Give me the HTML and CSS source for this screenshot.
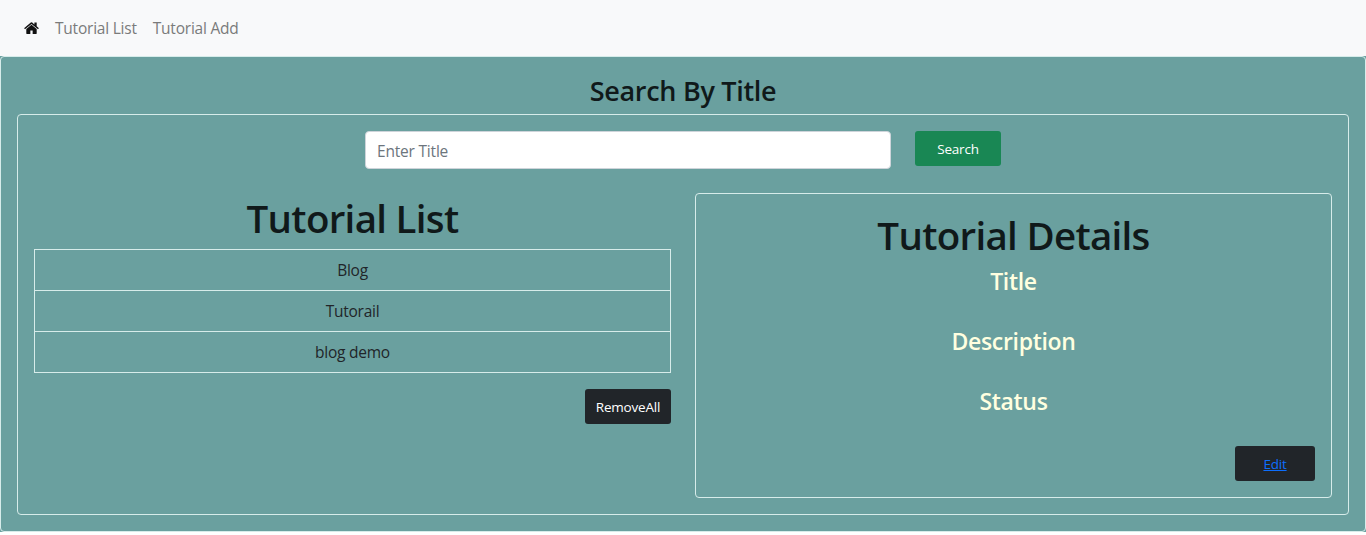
FILE: index.html
```html
<!DOCTYPE html>
<html lang="en">
<head>
<meta charset="utf-8">
<title>Tutorials</title>
<link rel="stylesheet" href="styles.css">
</head>
<body>
<nav class="navbar">
  <a class="home" href="#" aria-label="Home"><svg viewBox="0 0 1664 1312" width="15" height="12"><path fill="currentColor" d="M1408 768v480q0 26-19 45t-45 19H960V928H704v384H320q-26 0-45-19t-19-45V768l1-6 575-474 575 474 1 6zm223-69l-62 74q-8 9-21 11h-3q-13 0-21-7L832 200 140 777q-12 8-24 7-13-2-21-11l-62-74q-8-10-7-23.500T37 654L756 55q32-26 76-26t76 26l244 204V64q0-14 9-23t23-9h192q14 0 23 9t9 23v408l219 182q10 8 11 21.500t-7 23.500z"/></svg></a>
  <a class="nav-link" href="#">Tutorial List</a>
  <a class="nav-link" href="#">Tutorial Add</a>
</nav>
<main class="page">
  <section class="card outer">
    <h3 class="search-heading">Search By Title</h3>
    <div class="card inner">
      <form class="search">
        <input class="search-input" type="text" placeholder="Enter Title">
        <button class="btn btn-search" type="button">Search</button>
      </form>
      <div class="columns">
        <div class="list-column">
          <h1 class="heading list-heading">Tutorial List</h1>
          <ul class="list">
            <li class="item item-blog">Blog</li>
            <li class="item item-tutorial">Tutorail</li>
            <li class="item item-demo">blog demo</li>
          </ul>
          <button class="btn btn-remove" type="button">RemoveAll</button>
        </div>
        <div class="card details">
          <h1 class="heading details-heading">Tutorial Details</h1>
          <h4 class="field">Title</h4>
          <h4 class="field">Description</h4>
          <h4 class="field">Status</h4>
          <button class="btn btn-edit" type="button"><a class="edit-link" href="#">Edit</a></button>
        </div>
      </div>
    </div>
  </section>
</main>
</body>
</html>
```
FILE: styles.css
```css
* { box-sizing: border-box; }
body {
  margin: 0;
  background: #fff;
  color: #212529;
  font: 400 16px/24px "Segoe UI", "Open Sans", "Noto Sans", sans-serif;
}
h1, h3, h4, ul { margin: 0; padding: 0; }
.navbar {
  display: flex;
  align-items: center;
  height: 56px;
  padding: 0 24px;
  gap: 16px;
  background: #f8f9fa;
}
.home { display: flex; color: #111; }
.nav-link {
  color: #7a7b7b;
  font-size: 15.5px;
  letter-spacing: -0.22px;
  font-weight: 375;
  text-decoration: none;
  white-space: nowrap;
}
.page { background: #6aa09f; }
.card { border: 1px solid #d7ecea; border-radius: 4px; }
.outer { height: 476px; padding: 16px; }
.search-heading {
  height: 41px;
  color: #10191a;
  font-size: 27px;
  font-weight: 570;
  line-height: 35px;
  letter-spacing: -0.3px;
  text-align: center;
}
.inner { height: 401px; padding: 16px; }
.search {
  display: flex;
  justify-content: center;
  align-items: flex-start;
  gap: 24px;
  margin-bottom: 24px;
}
.search-input {
  width: 526px;
  height: 38px;
  padding: 1px 12px 0 11px;
  border: 1px solid #ced4da;
  border-radius: 4px;
  background: #fff;
  font: inherit;
  font-size: 15.5px;
  letter-spacing: -0.2px;
}
.search-input::placeholder { color: #6c757d; opacity: 1; }
.btn {
  height: 35px;
  padding: 0;
  border: 0;
  border-radius: 3px;
  background: #212529;
  color: #fff;
  font: inherit;
  font-size: 13.5px;
  letter-spacing: -0.2px;
  text-align: center;
}
.btn-search { width: 86px; background: #198754; }
.columns {
  display: grid;
  grid-template-columns: 637px 637px;
  gap: 24px;
  align-items: start;
}
.list-column { display: flex; flex-direction: column; }
.heading {
  height: 56px;
  color: #10191a;
  font-size: 38.5px;
  font-weight: 570;
  line-height: 50px;
  letter-spacing: -0.7px;
  text-align: center;
}
.list { list-style: none; border: 1px solid #d7ecea; margin-bottom: 16px; }
.item {
  height: 41px;
  padding-top: 8px;
  font-size: 15.5px;
  letter-spacing: -0.25px;
  text-align: center;
}
.item + .item { border-top: 1px solid #d7ecea; }
.item:first-child { height: 40px; }
.btn-remove { width: 86px; align-self: flex-end; }
.details {
  display: flex;
  flex-direction: column;
  height: 305px;
  padding: 16px;
}
.field {
  height: 60px;
  color: #ffffe0;
  font-size: 23px;
  font-weight: 600;
  line-height: 30px;
  letter-spacing: -0.3px;
  text-align: center;
}
.btn-edit { width: 80px; align-self: flex-end; }
.edit-link { color: #0d6efd; }
```
